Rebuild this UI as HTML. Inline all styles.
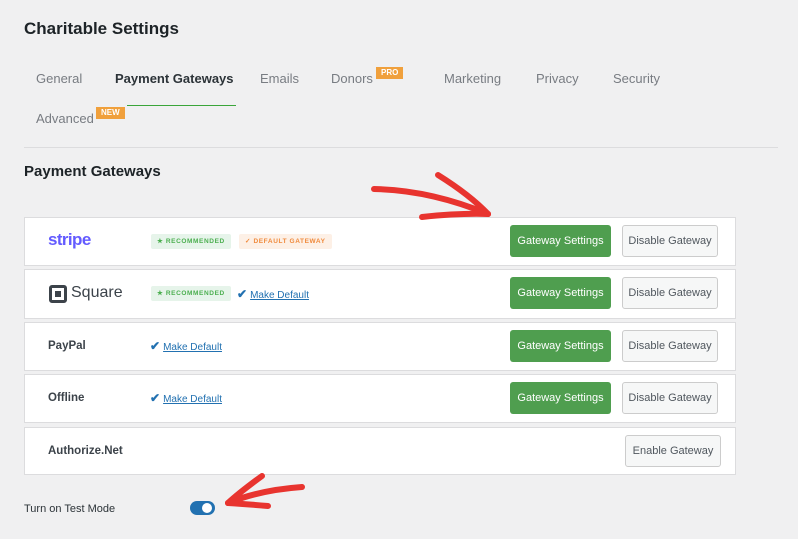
<!DOCTYPE html><html><head><style>
body{margin:0;width:798px;height:539px;background:#f0f0f1;font-family:"Liberation Sans",sans-serif;position:relative;overflow:hidden;color:#1d2327}
.a{position:absolute}
.tab{position:absolute;font-size:13px;color:#787c82}
.badge{position:absolute;background:#f0a03c;color:#fff;font-size:8px;font-weight:bold;padding:1px 5px;line-height:10px}
.row{position:absolute;left:24px;width:710px;background:#fff;border:1px solid #dcdcde}
.name{position:absolute;left:23px;font-size:11.5px;font-weight:bold;color:#3c434a}
.gs{position:absolute;left:485px;top:7px;width:101px;height:32px;background:#4f9e4f;color:#fff;border-radius:3px;font-size:11px;text-align:center;line-height:32px}
.dg{position:absolute;left:597px;top:7px;width:94px;height:30px;background:#f6f7f7;border:1px solid #ccc;border-radius:3px;color:#50575e;font-size:11px;text-align:center;line-height:30px}
.rec{position:absolute;left:126px;background:#e6f4ea;color:#4caf50;font-size:6.5px;font-weight:bold;letter-spacing:.6px;padding:0 6px;height:15px;line-height:15px;border-radius:2px}
.md{position:absolute;font-size:10px;color:#2271b1;text-decoration:underline}
.md b{color:#2271b1;font-size:12px;text-decoration:none;display:inline-block;margin-right:3px}
</style></head><body>
<div class="a" style="left:24px;top:19px;font-size:17px;font-weight:bold">Charitable Settings</div>
<div class="tab" style="left:36px;top:71px">General</div>
<div class="tab" style="left:115px;top:71px;color:#2c3338;font-weight:bold">Payment Gateways</div>
<div class="tab" style="left:260px;top:71px">Emails</div>
<div class="tab" style="left:331px;top:71px">Donors</div>
<div class="badge" style="left:376px;top:67px">PRO</div>
<div class="tab" style="left:444px;top:71px">Marketing</div>
<div class="tab" style="left:536px;top:71px">Privacy</div>
<div class="tab" style="left:613px;top:71px">Security</div>
<div class="tab" style="left:36px;top:111px">Advanced</div>
<div class="badge" style="left:96px;top:107px">NEW</div>
<div class="a" style="left:127px;top:105px;width:109px;height:1px;background:#3aa53a"></div>
<div class="a" style="left:24px;top:147px;width:754px;height:1px;background:#dcdcde"></div>
<div class="a" style="left:24px;top:163px;font-size:15px;font-weight:bold">Payment Gateways</div>

<div class="row" style="top:217px;height:47px">
<div class="a" style="left:23px;top:12px;font-size:17px;font-weight:bold;color:#635bff;letter-spacing:-.6px">stripe</div>
<div class="rec" style="top:16px">★ RECOMMENDED</div>
<div class="a" style="left:214px;top:16px;background:#fdf0e6;color:#f08a3c;font-size:6.5px;font-weight:bold;letter-spacing:.6px;padding:0 6px;height:15px;line-height:15px;border-radius:2px">✓ DEFAULT GATEWAY</div>
<div class="gs">Gateway Settings</div><div class="dg">Disable Gateway</div></div>

<div class="row" style="top:269px;height:48px">
<div class="a" style="left:24px;top:15px;width:12px;height:12px;border:3px solid #3c434a;border-radius:3px"><div class="a" style="left:3px;top:3px;width:6px;height:6px;background:#3c434a"></div></div>
<div class="a" style="left:46px;top:14px;font-size:16px;color:#3c434a">Square</div>
<div class="rec" style="top:16px">★ RECOMMENDED</div>
<div class="md" style="left:212px;top:17px"><b>✔</b>Make Default</div>
<div class="gs">Gateway Settings</div><div class="dg">Disable Gateway</div></div>

<div class="row" style="top:322px;height:47px">
<div class="name" style="top:17px">PayPal</div>
<div class="md" style="left:125px;top:16px"><b>✔</b>Make Default</div>
<div class="gs">Gateway Settings</div><div class="dg">Disable Gateway</div></div>

<div class="row" style="top:374px;height:47px">
<div class="name" style="top:17px">Offline</div>
<div class="md" style="left:125px;top:16px"><b>✔</b>Make Default</div>
<div class="gs">Gateway Settings</div><div class="dg">Disable Gateway</div></div>

<div class="row" style="top:427px;height:46px">
<div class="name" style="top:17px">Authorize.Net</div>
<div class="dg" style="left:600px;top:7px">Enable Gateway</div></div>

<div class="a" style="left:24px;top:503px;font-size:11px;color:#2c3338">Turn on Test Mode</div>
<div class="a" style="left:190px;top:501px;width:25px;height:14px;background:#2271b1;border-radius:8px"><div class="a" style="left:12px;top:2px;width:10px;height:10px;background:#fff;border-radius:50%"></div></div>

<svg class="a" style="left:0;top:0" width="798" height="539">
<g fill="none" stroke="#e8342f" stroke-width="6" stroke-linecap="round">
<path d="M374 189 Q430 190 488 214"/><path d="M438 175 Q470 195 488 214"/><path d="M422 217 Q460 213 488 214"/>
<path d="M302 487 Q260 490 228 503"/><path d="M262 476 Q240 492 228 503"/><path d="M268 506 Q245 504 228 503"/>
</g></svg>
</body></html>
